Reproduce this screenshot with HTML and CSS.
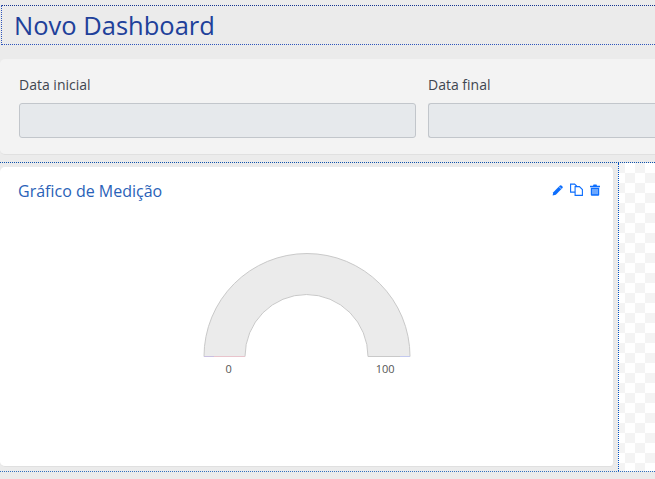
FILE: index.html
```html
<!DOCTYPE html>
<html lang="pt">
<head>
<meta charset="utf-8">
<title>Novo Dashboard</title>
<link rel="stylesheet" href="styles.css">
</head>
<body>
<header class="title-bar"><h1 class="title">Novo Dashboard</h1></header>
<section class="filters">
  <div class="field">
    <label class="field-label">Data inicial</label>
    <div class="field-input"></div>
  </div>
  <div class="field field-end">
    <label class="field-label">Data final</label>
    <div class="field-input field-input-end"></div>
  </div>
</section>
<main class="grid-area">
  <article class="card">
    <div class="card-head">
      <h2 class="card-title">Gráfico de Medição</h2>
      <div class="card-actions">
        <svg class="icon icon-edit" viewBox="0 0 12 12"><path d="M.6 11.400l.7-3.200L8 1.500a1 1 0 0 1 1.400 0l1.100 1.100a1 1 0 0 1 0 1.400L3.800 10.700z" fill="#0d6efd"/><path d="M7.100 2.700l2.200 2.200" stroke="#fff" stroke-width=".7"/></svg>
        <svg class="icon icon-copy" viewBox="0 0 13 13"><path d="M.6 1.100h4l2 2v6h-6z" fill="#fff" stroke="#0d6efd" stroke-width="1.100"/><path d="M5.100 3.600h4.300l3 3v5.800H5.100z" fill="#fff" stroke="#0d6efd" stroke-width="1.100"/></svg>
        <svg class="icon icon-trash" viewBox="0 0 10 12"><path d="M0 1.800h10v1.400H0zM3 1.800L3.500.4h3L7 1.800z" fill="#0d6efd"/><path d="M.8 3.800h8.400v7a1 1 0 0 1-1 1H1.800a1 1 0 0 1-1-1z" fill="#0d6efd"/><path d="M3 5v5.200M5 5v5.200M7 5v5.200" stroke="#fff" stroke-width=".8"/></svg>
      </div>
    </div>
    <div class="gauge">
      <svg class="gauge-svg" viewBox="0 0 208 106" width="208" height="106">
        <path d="M1 104.500A103 103 0 0 1 207 104.500H165A61.500 62 0 0 0 42 104.500Z" fill="#ebebeb" stroke="#c9c9c9" stroke-width="1"/>
        <path d="M1 104.500H11" stroke="#c9bfe0" stroke-width="1"/>
        <path d="M11 104.500H42" stroke="#e8c4cc" stroke-width="1"/>
        <path d="M197 104.500H207" stroke="#c3c9ee" stroke-width="1"/>
      </svg>
      <div class="gauge-scale"><span>0</span><span>100</span></div>
    </div>
  </article>
  <div class="drop-zone"></div>
</main>
</body>
</html>
```

FILE: styles.css
```css
* { box-sizing: border-box; }
html, body { margin: 0; height: 100%; overflow: hidden; }
body {
  background: #ebebeb;
  font-family: "Open Sans", "Noto Sans", sans-serif;
  padding-top: 5px;
}
.title-bar {
  height: 40px;
  margin-left: 1px;
  border-top: 1px dotted #12318f;
  border-bottom: 1px dotted #2f56bc;
  border-left: 1px dotted #2f56bc;
  display: flex;
  align-items: center;
  padding-left: 12px;
}
.title {
  margin: 0;
  font-size: 25.500px;
  font-weight: 400;
  line-height: 34px;
  color: #20409a;
}
.filters {
  margin-top: 14px;
  height: 96px;
  background: #f3f3f3;
  border-bottom: 1px solid #e0e0e0;
  border-radius: 5px 0 0 5px;
  display: flex;
  gap: 12px;
  padding: 16px 0 0 19px;
  overflow: hidden;
}
.field { flex: 0 0 397px; }
.field-end { flex: 1 0 240px; }
.field-label {
  display: block;
  height: 28px;
  font-size: 14px;
  line-height: 20px;
  color: #3f4650;
}
.field-input {
  height: 35px;
  background: #e6e9ec;
  border: 1px solid #c2c6cb;
  border-radius: 3px;
}
.field-input-end { border-radius: 3px 0 0 3px; border-right: 0; }
.grid-area {
  margin-top: 7px;
  height: 310px;
  border-top: 1px dotted #0f52ac;
  border-bottom: 1px dotted #2f70c0;
  display: flex;
  padding-top: 4px;
}
.card {
  flex: 0 0 615px;
  height: 300px;
  background: #fff;
  border-right: 2px solid #e8e8e8;
  border-bottom: 1px solid #e0e0e0;
  border-radius: 5px;
  display: flex;
  flex-direction: column;
  padding: 13px 12px 0 18px;
}
.card-head { display: flex; justify-content: space-between; align-items: flex-start; }
.card-title {
  margin: 0;
  font-size: 16px;
  font-weight: 400;
  line-height: 22px;
  color: #2a62b8;
}
.card-actions { display: flex; align-items: center; gap: 7px; padding: 3px 1px 0 0; }
.icon { height: 12px; display: block; }
.icon-edit { width: 12px; }
.icon-copy { width: 13px; height: 13px; margin-left: -1px; }
.icon-trash { width: 10px; }
.gauge {
  margin-top: 50px;
  margin-left: -18px;
  margin-right: -12px;
  display: flex;
  flex-direction: column;
  align-items: center;
}
.gauge-svg { display: block; }
.gauge-scale {
  width: 208px;
  display: flex;
  justify-content: space-between;
  padding: 4px 16px 0 23px;
  font-size: 11px;
  line-height: 14px;
  color: #555;
}
.drop-zone {
  flex: 1;
  margin-top: -4px;
  margin-left: 3px;
  border-left: 1px dotted #0050c4;
  background-color: #fff;
  background-image: conic-gradient(#f4f4f4 25%, #fff 0 50%, #f4f4f4 0 75%, #fff 0);
  background-size: 20px 20px;
  background-position: -4px 10px;
}
```
